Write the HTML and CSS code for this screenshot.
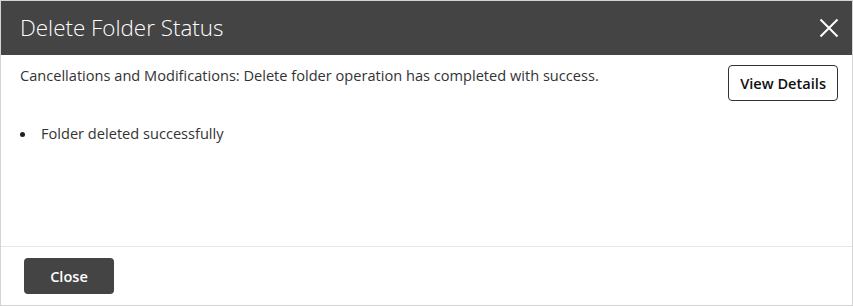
FILE: index.html
```html
<!DOCTYPE html>
<html>
<head>
<meta charset="utf-8">
<link rel="stylesheet" href="styles.css">
</head>
<body>
<div class="dialog">
  <div class="header">
    <div class="title">Delete Folder Status</div>
    <button class="close-x" aria-label="Close">
      <svg width="20" height="20" viewBox="0 0 20 20"><path d="M1.5 1.5 L18.5 18.5 M18.5 1.5 L1.5 18.5" stroke="#fff" stroke-width="2" fill="none"/></svg>
    </button>
  </div>
  <div class="content">
    <div class="row">
      <div class="message">Cancellations and Modifications: Delete folder operation has completed with success.</div>
      <button class="btn-outline">View Details</button>
    </div>
    <ul class="list">
      <li>Folder deleted successfully</li>
    </ul>
  </div>
  <div class="footer">
    <button class="btn-dark">Close</button>
  </div>
</div>
</body>
</html>
```
FILE: styles.css
```css
* { box-sizing: border-box; }
html, body { margin: 0; padding: 0; background: #fff; }
body { font-family: "Open Sans", "Noto Sans", sans-serif; color: #333; }
.dialog {
  width: 853px;
  height: 306px;
  border: 1px solid #d4d4d4;
  display: flex;
  flex-direction: column;
}
.header {
  height: 54px;
  background: #444444;
  display: flex;
  align-items: center;
  justify-content: space-between;
  padding: 0 13px 1px 19px;
}
.title {
  color: #fff;
  font-size: 22.4px;
  font-weight: 300;
  line-height: 30px;
}
.close-x {
  background: none;
  border: 0;
  padding: 0;
  width: 20px;
  height: 20px;
  display: flex;
  cursor: pointer;
}
.content {
  flex: 1;
  padding: 10px 14px 0 19px;
}
.row {
  display: flex;
  justify-content: space-between;
  align-items: flex-start;
}
.message {
  font-size: 14.6px;
  line-height: 20px;
  color: #333;
}
.btn-outline {
  font-family: inherit;
  font-size: 14.6px;
  font-weight: 600;
  color: #111;
  background: #fff;
  border: 1px solid #333;
  border-radius: 4px;
  height: 36px;
  padding: 0 11px;
}
.list {
  margin: 22px 0 0 0;
  padding: 0;
  list-style: none;
  font-size: 14.6px;
  line-height: 20px;
}
.list li {
  display: flex;
}
.list li::before {
  content: "";
  width: 5px;
  height: 5px;
  border-radius: 50%;
  background: #222;
  flex: none;
  margin: 9px 16px 0 0;
}
.footer {
  border-top: 1px solid #e6e6e6;
  height: 59px;
  padding: 11px 0 0 23px;
}
.btn-dark {
  font-family: inherit;
  font-size: 14.6px;
  font-weight: 600;
  color: #fff;
  background: #444;
  border: 0;
  border-radius: 4px;
  width: 90px;
  height: 36px;
}
```
